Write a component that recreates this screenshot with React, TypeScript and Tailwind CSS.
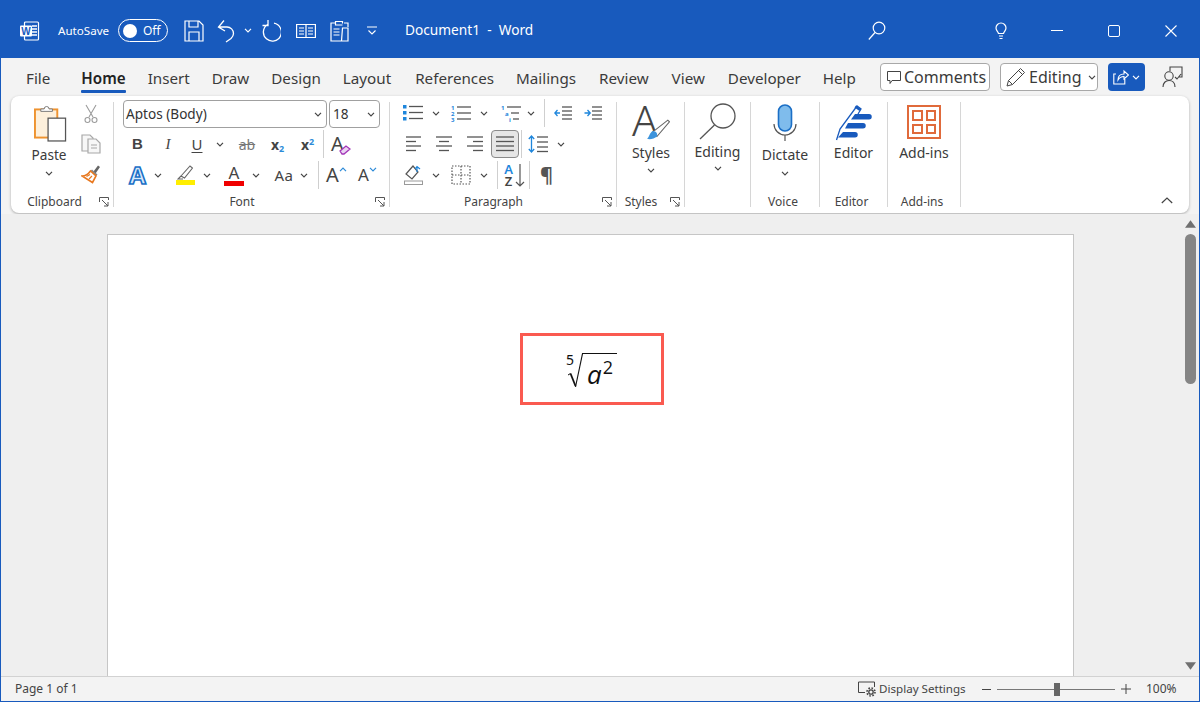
import React from "react";

type P = { className?: string };

const Chev = ({ className = "", color = "#444" }: P & { color?: string }) => (
  <svg viewBox="0 0 8 5" className={`w-[8px] h-[5px] shrink-0 ${className}`} fill="none" stroke={color} strokeWidth="1.2">
    <path d="M1 .8l3 3 3-3" />
  </svg>
);

const Launcher = () => (
  <svg viewBox="0 0 10 10" className="w-[10px] h-[10px] shrink-0 ml-[5px]" fill="none" stroke="#555" strokeWidth="1">
    <path d="M.5 5V.5H9.5V3M3 3l6 6M9 5v4H5" />
  </svg>
);

const Sep = () => <div className="w-px bg-[#d6d6d6] my-[6px] shrink-0" />;
const VBar = ({ className = "" }: P) => <div className={`w-px h-[28px] bg-[#cfcfcf] shrink-0 ${className}`} />;

const Label = ({ text, launcher, className = "" }: { text: string; launcher?: boolean } & P) => (
  <div className={`h-[18px] mb-[2px] flex items-center pr-[4px] shrink-0 ${className}`}>
    <span className="flex-1 text-center text-[12px] text-[#444]">{text}</span>
    {launcher && <Launcher />}
  </div>
);

const Lines = ({ x, ys, w, s = "#555" }: { x: number; ys: number[]; w: number; s?: string }) => (
  <g stroke={s} strokeWidth="1.3">
    {ys.map((y) => (
      <path key={y} d={`M${x} ${y}h${w}`} />
    ))}
  </g>
);

const Align = ({ kind, className = "" }: { kind: "l" | "c" | "r" | "j" } & P) => {
  const rows: [number, number, number][] =
    kind === "l"
      ? [[1, 15, 3], [1, 10, 7.5], [1, 15, 12], [1, 10, 16.5]]
      : kind === "c"
      ? [[1, 16, 3], [4, 10, 7.5], [1, 16, 12], [4, 10, 16.5]]
      : kind === "r"
      ? [[2, 16, 3], [8, 10, 7.5], [2, 16, 12], [8, 10, 16.5]]
      : [[0, 18, 3], [0, 18, 7.5], [0, 18, 12], [0, 18, 16.5]];
  return (
    <svg viewBox="0 0 18 20" className={`w-[18px] h-[20px] shrink-0 ${className}`} stroke="#555" strokeWidth="1.3">
      {rows.map(([x, w, y]) => (
        <path key={y} d={`M${x} ${y}h${w}`} />
      ))}
    </svg>
  );
};

function TitleBar() {
  return (
    <div className="h-[58px] pt-[3px] bg-[#185abd] flex items-center text-white shrink-0">
      <svg viewBox="0 0 20 20" className="w-[20px] h-[20px] ml-[19px] shrink-0">
        <rect x="4.5" y="1" width="14" height="18" rx="1" fill="none" stroke="#fff" strokeWidth="1.2" />
        <path d="M12 5h5M12 8h5M12 11h5M12 14h5" stroke="#fff" strokeWidth="1.3" />
        <rect x="0" y="4.5" width="12" height="11" rx="1" fill="#fff" />
        <text x="6" y="13.5" textAnchor="middle" fontSize="10" fontWeight="700" fill="#185abd" fontFamily="'Liberation Sans'">W</text>
      </svg>
      <span className="ml-[18px] text-[11.6px] w-[53px]">AutoSave</span>
      <div className="ml-[7px] w-[50px] h-[23px] rounded-full border border-white flex items-center pl-[4px] shrink-0">
        <span className="w-[14px] h-[14px] rounded-full bg-white" />
        <span className="ml-[6px] text-[12px]">Off</span>
      </div>
      <svg viewBox="0 0 20 22" className="w-[20px] h-[22px] ml-[16px] shrink-0" fill="none" stroke="#fff" strokeWidth="1.2">
        <path d="M1 1h14l4 4v16H1zM5 1v6h9V1M5 21v-9h10v9" />
      </svg>
      <svg viewBox="0 0 19 24" className="w-[19px] h-[24px] ml-[13px] shrink-0" fill="none" stroke="#fff" strokeWidth="1.3">
        <path d="M7 1.5L1.5 8 8 12M1.5 8H10a6.5 6.5 0 0 1 6.500 6.500c0 2-1 3.500-2.500 5L9 23" />
      </svg>
      <Chev color="#fff" className="ml-[8px]" />
      <svg viewBox="0 0 20 24" className="w-[20px] h-[24px] ml-[9px] shrink-0" fill="none" stroke="#fff" strokeWidth="1.3">
        <path d="M6.500 5.500A9 9 0 1 0 13 4.200M7 1v5.500H1.500" />
      </svg>
      <svg viewBox="0 0 20 16" className="w-[20px] h-[16px] ml-[15px] shrink-0" fill="none" stroke="#fff" strokeWidth="1.200">
        <path d="M.6 1.500h18.800v13H.6zM10 1.500v13M3 5h5M3 8h5M3 11h5M12 5h5M12 8h5M12 11h5" />
      </svg>
      <svg viewBox="0 0 19 22" className="w-[19px] h-[22px] ml-[14px] shrink-0" fill="none" stroke="#fff" strokeWidth="1.200">
        <path d="M5 3H1v18h10M13 3h-.5V1.500h-7V5h7M3.500 9h6M3.500 12h6M3.500 15h6M12.500 8H18v13h-6.500zM15 11v.1M15 14v.1M15 17v.1M14 3h4v4" />
      </svg>
      <svg viewBox="0 0 10 9" className="w-[10px] h-[9px] ml-[18px] shrink-0" fill="none" stroke="#fff" strokeWidth="1.100">
        <path d="M0 1h10M1.500 4.500L5 8l3.500-3.500" />
      </svg>
      <span className="ml-[28px] text-[13.7px] whitespace-pre w-[130px]">Document1  -  Word</span>
      <svg viewBox="0 0 18 20" className="w-[18px] h-[20px] ml-[333px] shrink-0" fill="none" stroke="#fff" strokeWidth="1.200">
        <circle cx="11" cy="7" r="5.800" />
        <path d="M7 11.500L.8 18.500" />
      </svg>
      <svg viewBox="0 0 12 18" className="w-[12px] h-[18px] ml-[109px] shrink-0" fill="none" stroke="#fff" strokeWidth="1.200">
        <path d="M3.500 11.500C3 9.500 1 8.500 1 6a5 5 0 0 1 10 0c0 2.500-2 3.500-2.500 5.500zM4 14h4M4.500 16.500h3" />
      </svg>
      <div className="ml-[44px] w-[12px] h-px bg-white shrink-0" />
      <div className="ml-[45px] w-[12px] h-[12px] rounded-[2px] border border-white shrink-0" />
      <svg viewBox="0 0 12 12" className="w-[12px] h-[12px] ml-[45px] shrink-0" fill="none" stroke="#fff" strokeWidth="1.100">
        <path d="M.5.500l11 11M11.500.500l-11 11" />
      </svg>
    </div>
  );
}

const tabs: [string, string][] = [
  ["File", "mr-[9px]"],
  ["Home", "font-semibold text-[#222]"],
  ["Insert", ""],
  ["Draw", ""],
  ["Design", ""],
  ["Layout", ""],
  ["References", "ml-[2px]"],
  ["Mailings", ""],
  ["Review", "ml-px"],
  ["View", "ml-px"],
  ["Developer", "ml-px"],
  ["Help", ""],
];

function TabRow() {
  return (
    <div className="h-[38px] bg-[#f3f3f3] flex items-start shrink-0">
      <div className="flex gap-[22px] pl-[25px] pt-[7px] text-[15.2px] text-[#3b3b3b] w-[879px] shrink-0">
        {tabs.map(([t, c]) => (
          <div key={t} className={`relative h-[26px] leading-[26px] ${c}`}>
            {t}
            {t === "Home" && <div className="absolute left-0 right-0 top-[25px] h-[3px] rounded-[1px] bg-[#185abd]" />}
          </div>
        ))}
      </div>
      <div className="mt-[5px] w-[110px] h-[28px] rounded-[4px] border border-[#a8a8a8] bg-white flex items-center pl-[6px] shrink-0 text-[16px] text-[#3b3b3b]">
        <svg viewBox="0 0 14 14" className="w-[14px] h-[14px] mr-[3px] shrink-0" fill="none" stroke="#444" strokeWidth="1">
          <path d="M.5 1.500h13v9H5L3 13.500v-3H.5z" />
        </svg>
        Comments
      </div>
      <div className="mt-[5px] ml-[10px] w-[98px] h-[28px] rounded-[4px] border border-[#a8a8a8] bg-white flex items-center pl-[5px] shrink-0 text-[16px] text-[#3b3b3b]">
        <svg viewBox="0 0 20 20" className="w-[20px] h-[20px] mr-[3px] shrink-0" fill="none" stroke="#444" strokeWidth="1">
          <path d="M1 19l1.500-5.500L14.500 1.500l4 4-12 12zM2.500 13.500l4 4M12.500 3.500l4 4" />
        </svg>
        Editing
        <Chev className="ml-[6px]" />
      </div>
      <div className="mt-[5px] ml-[10px] w-[37px] h-[28px] rounded-[4px] bg-[#185abd] flex items-center pl-[5px] shrink-0">
        <svg viewBox="0 0 16 16" className="w-[16px] h-[16px] shrink-0" fill="none" stroke="#fff" strokeWidth="1.100">
          <path d="M3 5H.8v10h11V10M5 11c0-4 2-6 6-6V2l4.500 4L11 10V7.500c-3 0-4.500 1-6 3.500z" />
        </svg>
        <Chev color="#fff" className="ml-[3px]" />
      </div>
      <svg viewBox="0 0 21 22" className="w-[21px] h-[22px] ml-[17px] mt-[8px] shrink-0" fill="none" stroke="#444" strokeWidth="1.100">
        <path d="M8 5V1h12v10h-3M13 11l2 2 4-5" />
        <circle cx="7" cy="10" r="4.200" />
        <path d="M1 21c0-4 2.500-6.500 6-6.500s6 2.500 6 6.500" />
      </svg>
    </div>
  );
}

function ClipboardGroup() {
  return (
    <div className="w-[102px] flex flex-col shrink-0">
      <div className="flex-1 flex">
        <div className="w-[70px] flex flex-col items-center pt-[9px] pl-[6px]">
          <svg viewBox="0 0 34 38" className="w-[33px] h-[37px] ml-[2px] shrink-0">
            <rect x="1" y="4.500" width="23" height="29" fill="#fdf0dc" stroke="#ee9330" strokeWidth="2" />
            <path d="M7 6.500V4h3.500a2.500 2.500 0 0 1 5 0H19v2.500z" fill="#fff" stroke="#777" strokeWidth="1" />
            <rect x="14.500" y="13.500" width="18" height="23.500" fill="#fff" stroke="#555" strokeWidth="1.300" />
          </svg>
          <span className="mt-[3px] text-[13.6px] leading-[20px] text-[#3b3b3b]">Paste</span>
          <Chev className="mt-[6px]" />
        </div>
        <div className="flex flex-col items-center pt-[8px] gap-[10px]">
          <svg viewBox="0 0 14 20" className="w-[14px] h-[20px] shrink-0" fill="none" stroke="#9c9c9c" strokeWidth="1.100">
            <path d="M2 1l7 12M12 1L5 13" />
            <circle cx="3.500" cy="16" r="2.500" />
            <circle cx="10.500" cy="16" r="2.500" />
          </svg>
          <svg viewBox="0 0 20 20" className="w-[20px] h-[20px] shrink-0" fill="#f7f7f7" stroke="#a8a8a8" strokeWidth="1.200">
            <path d="M1 1h8l3 3v13H1z" />
            <path d="M7 5h8l4 4v10H7zM10 11h6M10 14h6" />
          </svg>
          <svg viewBox="0 0 20 20" className="w-[20px] h-[20px] shrink-0">
            <path d="M12.500 7.500L17 1.500l2 1.500-4.500 6.500z" fill="#666" />
            <path d="M11 5.500l5.500 5L15 12 9.500 7z" fill="#888" />
            <path d="M9.500 7l5.500 5-3.500 6.500L1 12c3.500 0 6-1.500 8.500-5z" fill="#fff" stroke="#e8781f" strokeWidth="1.600" />
            <path d="M5.500 12.500l3.500-2M8 15l3-3" stroke="#e8781f" strokeWidth="1.200" />
          </svg>
        </div>
      </div>
      <Label text="Clipboard" launcher className="pl-[4px]" />
    </div>
  );
}

const Txt = ({ children, className = "" }: { children: React.ReactNode } & P) => (
  <span className={`shrink-0 text-center text-[#444] ${className}`}>{children}</span>
);

function FontGroup() {
  return (
    <div className="w-[275px] flex flex-col shrink-0">
      <div className="flex-1 flex flex-col pt-[4px]">
        <div className="h-[28px] flex pl-[9px] shrink-0">
          <div className="w-[204px] h-[28px] rounded-[4px] border border-[#a0a0a0] flex items-center justify-between pl-[2px] pr-[4px] text-[13.6px] text-[#333]">
            Aptos (Body)
            <Chev />
          </div>
          <div className="ml-[2px] w-[51px] h-[28px] rounded-[4px] border border-[#a0a0a0] flex items-center justify-between pl-[3px] pr-[4px] text-[13.6px] text-[#333]">
            18
            <Chev />
          </div>
        </div>
        <div className="h-[28px] mt-[2px] flex items-center pl-[18px] shrink-0">
          <Txt className="w-[10px] font-bold text-[15px] font-['Liberation_Sans']">B</Txt>
          <Txt className="w-[10px] ml-[21px] italic text-[15px] font-['Liberation_Serif']">I</Txt>
          <Txt className="w-[12px] ml-[18px] text-[15px] underline underline-offset-2">U</Txt>
          <Chev className="ml-[13px]" />
          <Txt className="w-[20px] ml-[13px] text-[14px] text-[#777] line-through">ab</Txt>
          <span className="w-[16px] ml-[14px] text-[14px] font-bold text-[#444] shrink-0">
            x<sub className="text-[9px] text-[#2b8ad8] font-bold">2</sub>
          </span>
          <span className="w-[16px] ml-[14px] text-[14px] font-bold text-[#444] shrink-0">
            x<sup className="text-[9px] text-[#2b8ad8] font-bold">2</sup>
          </span>
          <VBar className="ml-[6px]" />
          <div className="ml-[7px] w-[20px] h-[22px] relative shrink-0">
            <span className="text-[20px] leading-[22px] text-[#444]">A</span>
            <svg viewBox="0 0 12 10" className="absolute right-0 bottom-0 w-[12px] h-[10px]" fill="#e9d3f2" stroke="#a335b8" strokeWidth="1.300">
              <path d="M1 6l6-5 4 3-6 5H3z" />
            </svg>
          </div>
        </div>
        <div className="h-[28px] mt-[3px] flex items-center pl-[13px] shrink-0">
          <span className="w-[21px] text-[24px] leading-[26px] font-bold text-[#d8ebfc] text-center shrink-0 [-webkit-text-stroke:1.600px_#1a6fc6]">A</span>
          <Chev className="ml-[6px]" />
          <div className="ml-[13px] w-[20px] flex flex-col items-center shrink-0">
            <svg viewBox="0 0 16 15" className="w-[16px] h-[15px]" fill="none" stroke="#666" strokeWidth="1.100">
              <path d="M4 11l9-10 2.500 2-8 10zM4 11l-3 3 5 0" />
            </svg>
            <div className="w-[19px] h-[5px] bg-[#ffee00]" />
          </div>
          <Chev className="ml-[8px]" />
          <div className="ml-[13px] w-[20px] flex flex-col items-center shrink-0">
            <span className="text-[17px] leading-[15px] text-[#444]">A</span>
            <div className="mt-[1px] w-[20px] h-[5px] bg-[#f00000]" />
          </div>
          <Chev className="ml-[8px]" />
          <Txt className="w-[22px] ml-[13px] text-[15px] tracking-[0.5px]">Aa</Txt>
          <Chev className="ml-[5px]" />
          <VBar className="ml-[10px]" />
          <div className="ml-[7px] w-[22px] flex items-start shrink-0">
            <span className="text-[20px] leading-[24px] text-[#444]">A</span>
            <Chev color="#2b8ad8" className="mt-[4px] rotate-180" />
          </div>
          <div className="ml-[10px] w-[22px] flex items-start shrink-0">
            <span className="text-[17px] leading-[24px] text-[#444]">A</span>
            <Chev color="#2b8ad8" className="mt-[4px]" />
          </div>
        </div>
      </div>
      <Label text="Font" launcher />
    </div>
  );
}

function ParagraphGroup() {
  return (
    <div className="w-[226px] flex flex-col shrink-0">
      <div className="flex-1 flex flex-col pt-[4px]">
        <div className="h-[26px] flex items-center pl-[13px] shrink-0">
          <svg viewBox="0 0 20 18" className="w-[20px] h-[18px] shrink-0">
            <rect x="0" y="1" width="3.500" height="3.500" fill="#1e86dc" />
            <rect x="0" y="7" width="3.500" height="3.500" fill="#1e86dc" />
            <rect x="0" y="13" width="3.500" height="3.500" fill="#1e86dc" />
            <Lines x={6} ys={[2.500, 8.500, 14.500]} w={14} />
          </svg>
          <Chev className="ml-[9px]" />
          <svg viewBox="0 0 20 19" className="w-[20px] h-[19px] ml-[11px] shrink-0">
            <text x="0" y="5.500" fontSize="6" fontWeight="700" fill="#1e86dc">1</text>
            <text x="0" y="11.500" fontSize="6" fontWeight="700" fill="#1e86dc">2</text>
            <text x="0" y="17.500" fontSize="6" fontWeight="700" fill="#1e86dc">3</text>
            <Lines x={6} ys={[3, 9, 15]} w={14} />
          </svg>
          <Chev className="ml-[9px]" />
          <svg viewBox="0 0 20 19" className="w-[20px] h-[19px] ml-[13px] shrink-0">
            <text x="0" y="5.500" fontSize="6" fontWeight="700" fill="#1e86dc">1</text>
            <text x="4" y="11.500" fontSize="6" fontWeight="700" fill="#1e86dc">a</text>
            <text x="8" y="17.500" fontSize="6" fontWeight="700" fill="#1e86dc">i</text>
            <Lines x={6} ys={[3]} w={14} />
            <Lines x={10} ys={[9]} w={8} />
            <Lines x={12} ys={[15]} w={6} />
          </svg>
          <Chev className="ml-[6px]" />
          <VBar className="ml-[9px]" />
          <svg viewBox="0 0 18 16" className="w-[18px] h-[16px] ml-[9px] shrink-0">
            <Lines x={8} ys={[2, 6, 10, 14]} w={10} />
            <path d="M6 8H1M3.500 5L.8 8l2.700 3" fill="none" stroke="#1e86dc" strokeWidth="1.300" />
          </svg>
          <svg viewBox="0 0 18 16" className="w-[18px] h-[16px] ml-[12px] shrink-0">
            <Lines x={8} ys={[2, 6, 10, 14]} w={10} />
            <path d="M.5 8h5M3.500 5l2.700 3-2.700 3" fill="none" stroke="#1e86dc" strokeWidth="1.300" />
          </svg>
        </div>
        <div className="h-[28px] mt-[4px] flex items-center pl-[15px] shrink-0">
          <Align kind="l" />
          <Align kind="c" className="ml-[12px]" />
          <Align kind="r" className="ml-[12px]" />
          <div className="ml-[8px] w-[28px] h-[28px] rounded-[4px] border border-[#8a8a8a] bg-[#e6e6e6] flex items-center justify-center shrink-0">
            <Align kind="j" />
          </div>
          <VBar className="ml-[2px]" />
          <svg viewBox="0 0 20 18" className="w-[20px] h-[18px] ml-[6px] shrink-0">
            <Lines x={9} ys={[2, 7, 12, 16.500]} w={11} />
            <path d="M3.500 1v16M.8 4l2.700-3 2.700 3M.8 14l2.700 3 2.700-3" fill="none" stroke="#1e86dc" strokeWidth="1.300" />
          </svg>
          <Chev className="ml-[9px]" />
        </div>
        <div className="h-[28px] mt-[3px] flex items-center pl-[14px] shrink-0">
          <svg viewBox="0 0 20 20" className="w-[20px] h-[20px] shrink-0" fill="none">
            <path d="M9 1L2 9l6 5 6-7z" stroke="#555" strokeWidth="1.200" />
            <path d="M13 7V2M11 4l2-2.500L16 4" stroke="#1e86dc" strokeWidth="1.200" />
            <rect x=".5" y="16" width="18" height="3.500" stroke="#999" strokeWidth="1" />
          </svg>
          <Chev className="ml-[8px]" />
          <svg viewBox="0 0 20 20" className="w-[20px] h-[20px] ml-[11px] shrink-0" fill="none" stroke="#555" strokeWidth="1.200" strokeDasharray="1.500 1.500">
            <path d="M1 1h18v18H1zM10 1v18M1 10h18" />
          </svg>
          <Chev className="ml-[9px]" />
          <VBar className="ml-[9px]" />
          <div className="ml-[5px] w-[22px] flex items-center shrink-0">
            <span className="flex flex-col items-center text-[13px] leading-[12px] font-semibold w-[11px]">
              <span className="text-[#1e86dc]">A</span>
              <span className="text-[#444]">Z</span>
            </span>
            <svg viewBox="0 0 10 24" className="w-[10px] h-[24px] ml-px" fill="none" stroke="#555" strokeWidth="1.200">
              <path d="M5 1v22M1 19l4 4 4-4" />
            </svg>
          </div>
          <VBar className="ml-[4px]" />
          <span className="ml-[10px] text-[20px] font-bold text-[#555] shrink-0">¶</span>
        </div>
      </div>
      <Label text="Paragraph" launcher />
    </div>
  );
}

const BigLabel = ({ t, className = "" }: { t: string } & P) => (
  <span className={`text-[14px] leading-[20px] text-[#3b3b3b] ${className}`}>{t}</span>
);

function StylesGroup() {
  return (
    <div className="w-[67px] flex flex-col shrink-0">
      <div className="flex-1 flex flex-col items-center pt-[9px] pl-[1px]">
        <div className="relative w-[38px] h-[36px] shrink-0">
          <span className="absolute left-0 -top-[3px] text-[42px] leading-[36px] font-light text-[#444]">A</span>
          <svg viewBox="0 0 22 20" className="absolute right-0 bottom-0 w-[24px] h-[22px]">
            <path d="M6 12L20 1l1.500 1.500L10 16z" fill="#fff" stroke="#666" strokeWidth="1" />
            <path d="M6 11c3 0 5 2 4 5-2 2-7 3-9 2 2-1 2-5 5-7z" fill="#3d94dc" />
          </svg>
        </div>
        <BigLabel t="Styles" className="mt-[2px]" />
        <Chev className="mt-[5px]" />
      </div>
      <Label text="Styles" launcher />
    </div>
  );
}

function EditingGroup() {
  return (
    <div className="w-[65px] flex flex-col items-center pt-[7px] shrink-0">
      <svg viewBox="0 0 38 37" className="w-[38px] h-[37px] shrink-0" fill="none" stroke="#555" strokeWidth="1.300">
        <circle cx="24" cy="13" r="12" />
        <path d="M15.500 22L1 36" />
      </svg>
      <BigLabel t="Editing" className="mt-[2px]" />
      <Chev className="mt-[4px]" />
    </div>
  );
}

function VoiceGroup() {
  return (
    <div className="w-[68px] flex flex-col shrink-0">
      <div className="flex-1 flex flex-col items-center pt-[8px]">
        <svg viewBox="0 0 24 37" className="w-[24px] h-[37px] shrink-0">
          <rect x="5.500" y="1" width="13" height="26" rx="6.500" fill="#7fbcec" stroke="#1b6fc6" strokeWidth="1.600" />
          <path d="M1 20a11 11 0 0 0 22 0M12 31v6" fill="none" stroke="#555" strokeWidth="1.200" />
        </svg>
        <BigLabel t="Dictate" className="mt-[4px]" />
        <Chev className="mt-[6px]" />
      </div>
      <Label text="Voice" />
    </div>
  );
}

function EditorGroup() {
  return (
    <div className="w-[67px] flex flex-col shrink-0">
      <div className="flex-1 flex flex-col items-center pt-[8px]">
        <svg viewBox="0 0 38 37" className="w-[38px] h-[37px] shrink-0">
          <path d="M1.500 36L5 25 22 2l4 3-3 5" fill="#fff" stroke="#185abd" strokeWidth="1.300" />
          <path d="M21 1.500l5 3.500-1.500 2-5-3.500z" fill="#185abd" />
          <path d="M20 10h14a2.500 2.500 0 0 1 0 5.500H16zM13 19h15a2.500 2.500 0 0 1 0 5.500H10zM8 28h12a2.500 2.500 0 0 1 0 5.500H3z" fill="#185abd" />
        </svg>
        <BigLabel t="Editor" className="mt-[2px]" />
      </div>
      <Label text="Editor" />
    </div>
  );
}

function AddinsGroup() {
  return (
    <div className="w-[72px] flex flex-col shrink-0">
      <div className="flex-1 flex flex-col items-center pt-[9px]">
        <div className="w-[34px] h-[34px] border-[2px] border-[#e06a3b] grid grid-cols-2 gap-[3px] p-[3px] shrink-0">
          <span className="border-[2px] border-[#e06a3b]" />
          <span className="border-[2px] border-[#e06a3b]" />
          <span className="border-[2px] border-[#e06a3b]" />
          <span className="border-[2px] border-[#e06a3b]" />
        </div>
        <BigLabel t="Add-ins" className="mt-[4px]" />
      </div>
      <Label text="Add-ins" />
    </div>
  );
}

function Ribbon() {
  return (
    <div className="h-[118px] bg-[#f3f3f3] px-[10px] shrink-0">
      <div className="h-[117px] rounded-[8px] bg-white shadow-[0_1px_3px_rgba(0,0,0,0.3)] flex">
        <ClipboardGroup />
        <Sep />
        <FontGroup />
        <Sep />
        <ParagraphGroup />
        <Sep />
        <StylesGroup />
        <Sep />
        <EditingGroup />
        <Sep />
        <VoiceGroup />
        <Sep />
        <EditorGroup />
        <Sep />
        <AddinsGroup />
        <Sep />
        <div className="flex-1 flex items-end justify-end pr-[16px] pb-[9px]">
          <svg viewBox="0 0 12 7" className="w-[12px] h-[7px]" fill="none" stroke="#444" strokeWidth="1.200">
            <path d="M.8 6L6 1l5.200 5" />
          </svg>
        </div>
      </div>
    </div>
  );
}

function Document() {
  return (
    <div className="flex-1 min-h-0 bg-[#efefef] flex overflow-hidden">
      <div className="flex-1 pl-[106px] pt-[20px]">
        <div className="w-[967px] h-[460px] bg-white border border-b-0 border-[#c6c6c6] pt-[98px] pl-[412px]">
          <div className="w-[144px] h-[72px] border-[3px] border-[#fa5a50] bg-white flex items-start pl-[43px] text-[#111]">
            <span className="w-[8px] text-[14px] leading-[14px] mt-[17px] shrink-0">5</span>
            <svg viewBox="0 0 16 35" className="w-[16px] h-[35px] -ml-[7px] mt-[17px] shrink-0" fill="none" stroke="#111">
              <path d="M1 22l2.500-1.500" strokeWidth="1" />
              <path d="M3.500 20.500L8.500 33" strokeWidth="1.800" />
              <path d="M8.500 34L15.500 .6" strokeWidth="1.100" />
            </svg>
            <div className="w-[35px] h-[34px] border-t border-[#111] mt-[17px] -ml-px pl-[5px] flex items-start shrink-0 font-['Open_Sans',sans-serif]">
              <span className="italic font-medium text-[26px] leading-[30px] mt-[5px]">a</span>
              <span className="font-medium text-[18px] leading-[20px] mt-[3px] ml-px">2</span>
            </div>
          </div>
        </div>
      </div>
      <div className="w-[16px] shrink-0 flex flex-col items-center pt-[6px] pr-px">
        <svg viewBox="0 0 12 8" className="w-[11px] h-[8px] shrink-0" fill="#707070"><path d="M6 0l6 8H0z" /></svg>
        <div className="w-[11px] h-[150px] rounded-full bg-[#858585] mt-[6px] shrink-0" />
        <div className="flex-1" />
        <svg viewBox="0 0 12 8" className="w-[11px] h-[8px] mb-[6px] shrink-0" fill="#707070"><path d="M0 0h12L6 8z" /></svg>
      </div>
    </div>
  );
}

function StatusBar() {
  return (
    <div className="h-[25px] bg-[#f3f3f3] border-t border-[#d2d2d2] flex items-center text-[12px] text-[#444] shrink-0">
      <span className="ml-[14px] w-[843px] shrink-0">Page 1 of 1</span>
      <svg viewBox="0 0 20 16" className="w-[20px] h-[16px] shrink-0" fill="none" stroke="#444" strokeWidth="1">
        <path d="M7 11.500H.5V1h16v5" />
        <circle cx="13" cy="11" r="2.200" strokeWidth="1.300" />
        <circle cx="13" cy="11" r="4" strokeWidth="1.600" strokeDasharray="1.600 1.540" />
      </svg>
      <span className="w-[88px] ml-px shrink-0 whitespace-nowrap text-[11.6px]">Display Settings</span>
      <div className="ml-[15px] w-[9px] h-px bg-[#444] shrink-0" />
      <div className="ml-[6px] w-[118px] h-px bg-[#777] shrink-0 flex items-center pl-[57px]">
        <div className="w-[6px] h-[13px] bg-[#666] shrink-0" />
      </div>
      <svg viewBox="0 0 10 10" className="w-[10px] h-[10px] ml-[6px] shrink-0" stroke="#444" strokeWidth="1">
        <path d="M0 5h10M5 0v10" />
      </svg>
      <span className="ml-[15px] shrink-0">100%</span>
    </div>
  );
}

export default function App() {
  return (
    <div className="w-[1200px] h-[702px] overflow-hidden flex flex-col bg-[#f3f3f3] border-x border-b border-[#185abd] font-['Noto_Sans','Open_Sans',sans-serif]">
      <TitleBar />
      <TabRow />
      <Ribbon />
      <Document />
      <StatusBar />
    </div>
  );
}
